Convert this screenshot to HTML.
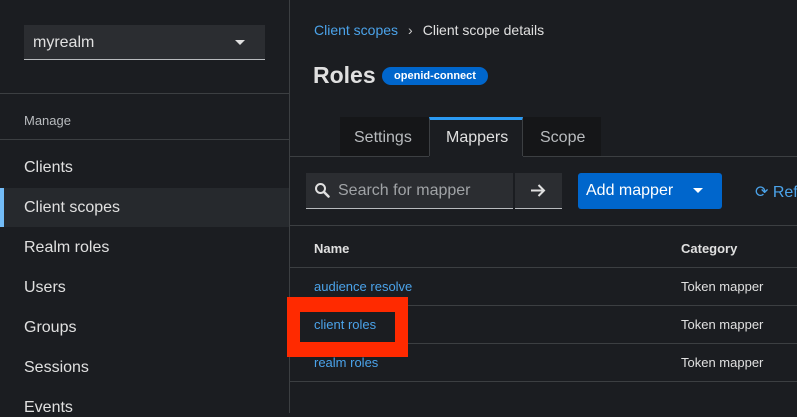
<!DOCTYPE html>
<html><head><style>
body{margin:0;width:797px;height:413px;overflow:hidden;background:#1b1d21;font-family:"Liberation Sans",sans-serif;position:relative;color:#e0e0e0}
div,span{position:absolute;box-sizing:border-box}
.t{white-space:nowrap}
.nav{left:24px;font-size:16px;color:#e0e0e0}
.hl{height:1px;background:#3c3f42}
.lk{color:#4ba3ea;font-size:13px;left:314px}
.cat{left:681px;font-size:13px;color:#e0e0e0}
</style></head><body>
<div style="left:0;top:0;width:289px;height:413px;background:#1b1d21"></div>
<div style="left:289px;top:0;width:1px;height:413px;background:#3c3f42"></div>
<div style="left:24px;top:25px;width:241px;height:35px;background:#2b2d31;border-bottom:1px solid #b8bbbe"></div>
<div class="t" style="left:33px;top:34px;font-size:16px;color:#e0e0e0">myrealm</div>
<div style="left:235px;top:40px;width:0;height:0;border-left:5px solid transparent;border-right:5px solid transparent;border-top:5px solid #e0e0e0"></div>
<div class="hl" style="left:0;top:93px;width:289px"></div>
<div class="t" style="left:24px;top:113px;font-size:13px;color:#b8bbbe">Manage</div>
<div class="hl" style="left:0;top:139px;width:289px"></div>
<div class="t nav" style="top:159px">Clients</div>
<div style="left:0;top:188px;width:289px;height:39px;background:#26292d"></div>
<div style="left:0;top:188px;width:4px;height:39px;background:#73bcf7"></div>
<div class="t nav" style="top:199px">Client scopes</div>
<div class="t nav" style="top:239px">Realm roles</div>
<div class="t nav" style="top:279px">Users</div>
<div class="t nav" style="top:319px">Groups</div>
<div class="t nav" style="top:359px">Sessions</div>
<div class="t nav" style="top:399px">Events</div>

<div class="t" style="left:314px;top:22px;font-size:14px"><span style="position:static;color:#4ba3ea">Client scopes</span><span style="position:static;color:#ccc;margin:0 10px">›</span><span style="position:static;color:#e0e0e0">Client scope details</span></div>
<div class="t" style="left:313px;top:62px;font-size:23px;font-weight:bold;color:#e0e0e0">Roles</div>
<div class="t" style="left:382px;top:67px;width:106px;height:18px;border-radius:9px;background:#0066cc;color:#fff;font-size:11px;font-weight:bold;text-align:center;line-height:18px">openid-connect</div>

<div style="left:340px;top:117px;width:89px;height:39px;background:#151618"></div>
<div class="t" style="left:354px;top:129px;font-size:16px;color:#b8bbbe">Settings</div>
<div style="left:429px;top:117px;width:94px;height:40px;background:#1b1d21;border-top:3px solid #2b9af3;border-left:1px solid #3c3f42;border-right:1px solid #3c3f42"></div>
<div class="t" style="left:446px;top:129px;font-size:16px;color:#e0e0e0">Mappers</div>
<div style="left:523px;top:117px;width:78px;height:39px;background:#151618"></div>
<div class="t" style="left:540px;top:129px;font-size:16px;color:#b8bbbe">Scope</div>
<div class="hl" style="left:290px;top:156px;width:507px"></div>
<div style="left:429px;top:156px;width:94px;height:1px;background:#1b1d21"></div>

<div style="left:306px;top:173px;width:207px;height:36px;background:#2b2d31;border-bottom:1px solid #b8bbbe"></div>
<svg style="position:absolute;left:314px;top:182px" width="16" height="16" viewBox="0 0 16 16"><circle cx="6.5" cy="6.5" r="4.5" fill="none" stroke="#e0e0e0" stroke-width="2"/><path d="M10 10 L14.5 14.5" stroke="#e0e0e0" stroke-width="2.5" stroke-linecap="round"/></svg>
<div class="t" style="left:338px;top:182px;font-size:16px;color:#a0a3a6">Search for mapper</div>
<div style="left:515px;top:173px;width:47px;height:36px;background:#2b2d31;border-bottom:1px solid #b8bbbe"></div>
<svg style="position:absolute;left:530px;top:183px" width="16" height="15" viewBox="0 0 16 15"><path d="M1 7.5H14M8.5 2L14 7.5L8.5 13" fill="none" stroke="#e0e0e0" stroke-width="2"/></svg>
<div style="left:578px;top:173px;width:144px;height:36px;background:#0066cc;border-radius:3px"></div>
<div class="t" style="left:586px;top:182px;font-size:16px;color:#fff">Add mapper</div>
<div style="left:693px;top:188px;width:0;height:0;border-left:5px solid transparent;border-right:5px solid transparent;border-top:5px solid #fff"></div>
<div class="t" style="left:755px;top:182px;font-size:16px;color:#4ba3ea">⟳ Refresh</div>

<div class="hl" style="left:290px;top:225px;width:507px"></div>
<div class="t" style="left:314px;top:241px;font-size:13px;font-weight:bold">Name</div>
<div class="t" style="left:681px;top:241px;font-size:13px;font-weight:bold">Category</div>
<div class="hl" style="left:290px;top:267px;width:507px"></div>
<div class="t lk" style="top:279px">audience resolve</div>
<div class="t cat" style="top:279px">Token mapper</div>
<div class="hl" style="left:290px;top:305px;width:507px"></div>
<div class="t cat" style="top:317px">Token mapper</div>
<div class="hl" style="left:290px;top:343px;width:507px"></div>
<div class="t lk" style="top:355px">realm roles</div>
<div class="t cat" style="top:355px">Token mapper</div>
<div class="hl" style="left:290px;top:381px;width:507px"></div>

<div style="left:287px;top:297px;width:121px;height:60px;border:13px solid #ff2a00;border-top-width:15px;border-bottom-width:15px"></div>
<div style="left:300px;top:312px;width:93px;height:30px;background:#1b1d21"></div>
<div class="t lk" style="top:317px">client roles</div>
</body></html>
